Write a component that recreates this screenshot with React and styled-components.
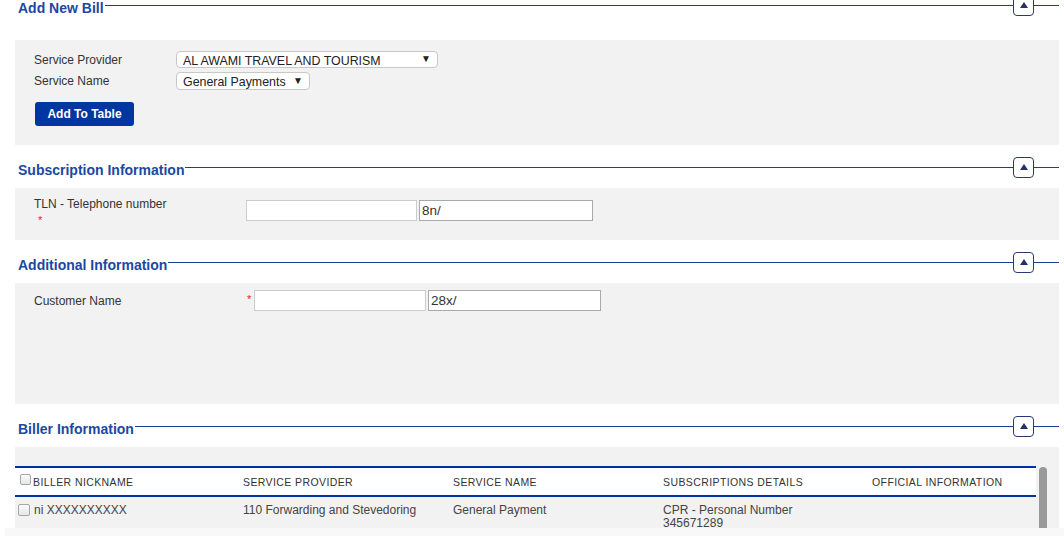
import React from 'react'
import styled, { createGlobalStyle } from 'styled-components';

const GlobalStyle = createGlobalStyle`
  html, body {
    margin: 0;
    padding: 0;
    background: #fff;
    overflow: hidden;
  }
  body {
    font-family: "Liberation Sans", Arial, sans-serif;
    color: #333;
  }
`;

const columns = [
  'BILLER NICKNAME',
  'SERVICE PROVIDER',
  'SERVICE NAME',
  'SUBSCRIPTIONS DETAILS',
  'OFFICIAL INFORMATION',
]

const SectionHeader = ({ title }) => (
  <HeaderRow>
    <Title>{title}</Title>
    <Rule />
    <Toggle type="button" aria-label="collapse">
      <Arrow />
    </Toggle>
    <RuleEnd />
  </HeaderRow>
)

const App = () => {
  return (
    <>
      <GlobalStyle />
      <Page>
        <SectionHeader title="Add New Bill" />
        <Panel top={24} pt={11} pb={19}>
          <FormGrid>
            <Label>Service Provider</Label>
            <FakeSelect width={262} height={17}>
              <span>AL AWAMI TRAVEL AND TOURISM</span>
              <Caret>▼</Caret>
            </FakeSelect>
            <Label>Service Name</Label>
            <FakeSelect width={134} height={18}>
              <span>General Payments</span>
              <Caret>▼</Caret>
            </FakeSelect>
          </FormGrid>
          <PrimaryButton type="button">Add To Table</PrimaryButton>
        </Panel>

        <SectionHeader title="Subscription Information" />
        <Panel height={52} pt={8}>
          <FieldRow>
            <FieldLabel>
              TLN - Telephone number
              <Required>*</Required>
            </FieldLabel>
            <Inputs offset={4}>
              <TextBox width={171} />
              <TextBox width={174} dark defaultValue="8n/" />
            </Inputs>
          </FieldRow>
        </Panel>

        <SectionHeader title="Additional Information" />
        <Panel height={121} pt={7}>
          <FieldRow>
            <FieldLabel inline>Customer Name</FieldLabel>
            <Inputs offset={0}>
              <Star>*</Star>
              <TextBox width={172} />
              <TextBox width={173} dark defaultValue="28x/" />
            </Inputs>
          </FieldRow>
        </Panel>

        <SectionHeader title="Biller Information" />
        <Panel height={81} pt={19} clip>
          <TableWrap>
            <Table>
              <HeadRow>
                {columns.map((c, i) => (
                  <HeadCell key={c}>
                    {i === 0 && <Check small />}
                    {c}
                  </HeadCell>
                ))}
              </HeadRow>
              <BodyRow>
                <Cell>
                  <Check />
                  ni XXXXXXXXXX
                </Cell>
                <Cell>110 Forwarding and Stevedoring</Cell>
                <Cell>General Payment</Cell>
                <Cell stack>
                  <span>CPR - Personal Number</span>
                  <span>345671289</span>
                </Cell>
                <Cell></Cell>
              </BodyRow>
            </Table>
            <ScrollThumb />
          </TableWrap>
        </Panel>
        <Footer />
      </Page>
    </>
  );
}

export default App

const Page = styled.div`
  margin-top: -5px;
  padding: 0 5px 0 15px;
`;

const HeaderRow = styled.div`
  display: flex;
  align-items: center;
  height: 21px;
`;

const Title = styled.h2`
  margin: 0 1px 0 3px;
  font-size: 14px;
  font-weight: 700;
  color: #1b48a1;
  line-height: 16px;
  padding-top: 5px;
  white-space: nowrap;
`;

const Rule = styled.div`
  flex: 1;
  height: 1px;
  background: #1c3f91;
`;

const RuleEnd = styled(Rule)`
  flex: 0 0 26px;
`;

const Toggle = styled.button`
  flex: 0 0 21px;
  width: 21px;
  height: 21px;
  margin: 0 -1px;
  padding: 0;
  border: 1px solid #2b3673;
  border-radius: 4px;
  background: #fff;
  display: flex;
  align-items: center;
  justify-content: center;
`;

const Arrow = styled.span`
  width: 0;
  height: 0;
  border-left: 4px solid transparent;
  border-right: 4px solid transparent;
  border-bottom: 6px solid #25306a;
  margin-top: -1px;
`;

const Panel = styled.section`
  background: #f2f2f2;
  margin: ${(p) => p.top ?? 10}px 0 12px;
  padding: ${(p) => p.pt ?? 0}px 0 ${(p) => p.pb ?? 0}px 19px;
  height: ${(p) => (p.height ? `${p.height}px` : 'auto')};
  box-sizing: border-box;
  overflow: ${(p) => (p.clip ? 'hidden' : 'visible')};
  ${(p) => p.clip && 'margin-bottom: 0; padding-left: 0;'}
`;

const FormGrid = styled.div`
  display: grid;
  grid-template-columns: 142px auto;
  row-gap: 4px;
  justify-items: start;
  align-items: center;
`;

const Label = styled.label`
  font-size: 12px;
  color: #333;
`;

const FakeSelect = styled.div`
  width: ${(p) => p.width}px;
  height: ${(p) => p.height}px;
  box-sizing: border-box;
  border: 1px solid #c8c8c8;
  border-radius: 4px;
  background: #fff;
  display: flex;
  align-items: center;
  justify-content: space-between;
  padding: 2px 6px 0 6px;
  font-size: 12.4px;
  color: #222;
  white-space: nowrap;
`;

const Caret = styled.span`
  font-size: 10px;
  color: #222;
  margin-top: -4px;
`;

const PrimaryButton = styled.button`
  margin-top: 12px;
  margin-left: 1px;
  width: 99px;
  height: 24px;
  border: none;
  border-radius: 3px;
  background: #0036a1;
  color: #fff;
  font-family: "Liberation Sans", Arial, sans-serif;
  font-size: 12px;
  font-weight: 700;
  padding: 0;
`;

const FieldRow = styled.div`
  display: flex;
  align-items: flex-start;
`;

const FieldLabel = styled.div`
  width: 212px;
  flex: 0 0 212px;
  font-size: 12px;
  line-height: 14px;
  color: #333;
  padding-top: ${(p) => (p.inline ? '4px' : '1px')};
`;

const Required = styled.span`
  display: block;
  color: #e0282e;
  font-size: 11px;
  line-height: 12px;
  margin: 3px 0 0 4px;
`;

const Star = styled.span`
  color: #e0282e;
  font-size: 11px;
  width: 6px;
  padding: 3px 0 0 1px;
  box-sizing: border-box;
  align-self: flex-start;
`;

const Inputs = styled.div`
  display: flex;
  gap: 2px;
  padding-top: ${(p) => p.offset}px;
`;

const TextBox = styled.input`
  width: ${(p) => p.width}px;
  height: 21px;
  box-sizing: border-box;
  border: 1px solid ${(p) => (p.dark ? '#a9a9a9' : '#cccccc')};
  background: #fff;
  font-family: "Liberation Sans", Arial, sans-serif;
  font-size: 13.5px;
  color: #333;
  padding: 0 2px;
  outline: none;
`;

const TableWrap = styled.div`
  display: flex;
  align-items: flex-start;
`;

const Table = styled.div`
  width: 1021px;
  border-top: 2px solid #0033a0;
`;

const gridCols = `
  display: grid;
  grid-template-columns: 223px 210px 210px 209px 1fr;
`;

const HeadRow = styled.div`
  ${gridCols}
  height: 27px;
  background: #fff;
  border-bottom: 2px solid #0033a0;
  align-items: center;
`;

const HeadCell = styled.div`
  display: flex;
  align-items: center;
  padding-left: 5px;
  font-size: 10.5px;
  color: #333;
  letter-spacing: 0.4px;
  white-space: nowrap;
`;

const BodyRow = styled.div`
  ${gridCols}
  padding-top: 7px;
`;

const Cell = styled.div`
  display: flex;
  align-items: flex-start;
  flex-direction: ${(p) => (p.stack ? 'column' : 'row')};
  padding-left: 5px;
  font-size: 12px;
  line-height: 13px;
  color: #444;
`;

const Check = styled.span`
  display: inline-block;
  box-sizing: border-box;
  flex: 0 0 auto;
  width: ${(p) => (p.small ? 11 : 12)}px;
  height: ${(p) => (p.small ? 11 : 12)}px;
  border: 1px solid #a6a6a6;
  border-radius: 2px;
  background: linear-gradient(#fafafa, #e6e6e6);
  margin: ${(p) => (p.small ? '-5px 2px 0 0' : '0 4px 0 -2px')};
`;

const ScrollThumb = styled.div`
  width: 8px;
  height: 80px;
  margin: 1px 0 0 3px;
  background: #9a9a9a;
  border-radius: 4px 4px 0 0;
`;

const Footer = styled.div`
  margin-left: -10px;
  margin-right: -5px;
  height: 20px;
  background: #f8f8f8;
`;
